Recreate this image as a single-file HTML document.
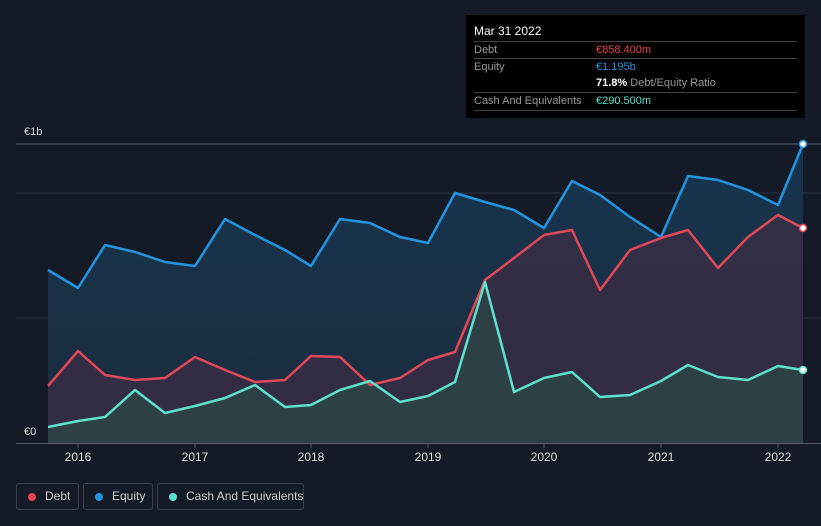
<html><head><style>body{margin:0;background:#151b26;font-family:"Liberation Sans",sans-serif;width:821px;height:526px;overflow:hidden;position:relative}
.tt{position:absolute;left:466px;top:15px;width:339px;height:103px;background:#000;color:#fff;font-size:11px}
.r{position:absolute;left:8px;right:8px;border-top:1px solid #444;height:17px;line-height:17px}
.g{color:#999}.v{position:absolute;left:122px;top:0}
.leg{position:absolute;top:483px;height:27px;border:1px solid #3a404a;border-radius:3px;color:#ccc;font-size:12px;line-height:25px;box-sizing:border-box;white-space:nowrap}
.leg i{position:absolute;left:11px;top:9px;width:8px;height:8px;border-radius:50%}
</style></head><body>
<svg width="821" height="526" style="position:absolute;left:0;top:0">
<defs>
<linearGradient id="e" x1="0" y1="0" x2="0" y2="1"><stop offset="0" stop-color="#163550"/><stop offset="1" stop-color="#1c2c3d"/></linearGradient>
</defs>
<line x1="16" y1="144" x2="821" y2="144" stroke="#555b66"/>
<line x1="16" y1="193" x2="821" y2="193" stroke="#2a313d"/>
<line x1="16" y1="318" x2="821" y2="318" stroke="#2a313d"/>
<polygon fill="url(#e)" points="48,443 48,270 78,288 105,245 135,252 165,262 195,266 225,219 255,235 285,250 311,266 340,219 370,223 400,237 428,243 455,193 485,202 514,210 544,228 572,181 600,195 630,217 661,237 688,176 718,180 748,190 778,205 803,144 803,443"/>
<polygon fill="#352d42" opacity="0.9" points="48,443 48,386 78,351 105,375 135,380 165,378 195,357 225,370 255,382 285,380 311,356 340,357 370,385 400,378 428,360 455,352 485,280 514,258 544,235 572,230 600,290 630,250 661,238 688,230 718,268 748,237 778,215 803,228 803,443"/>
<polygon fill="#2c4347" opacity="0.9" points="48,443 48,427 78,421 105,417 135,390 165,413 195,406 225,398 255,385 285,407 311,405 340,390 370,381 400,402 428,396 455,382 485,282 514,392 544,378 572,372 600,397 630,395 661,381 688,365 718,377 748,380 778,366 803,370 803,443"/>
<polyline fill="none" stroke="#2394e0" stroke-width="2.5" stroke-linejoin="round" points="48,270 78,288 105,245 135,252 165,262 195,266 225,219 255,235 285,250 311,266 340,219 370,223 400,237 428,243 455,193 485,202 514,210 544,228 572,181 600,195 630,217 661,237 688,176 718,180 748,190 778,205 803,144"/>
<polyline fill="none" stroke="#e0485a" stroke-width="2.5" stroke-linejoin="round" points="48,386 78,351 105,375 135,380 165,378 195,357 225,370 255,382 285,380 311,356 340,357 370,385 400,378 428,360 455,352 485,280 514,258 544,235 572,230 600,290 630,250 661,238 688,230 718,268 748,237 778,215 803,228"/>
<polyline fill="none" stroke="#5de0cc" stroke-width="2.5" stroke-linejoin="round" points="48,427 78,421 105,417 135,390 165,413 195,406 225,398 255,385 285,407 311,405 340,390 370,381 400,402 428,396 455,382 485,282 514,392 544,378 572,372 600,397 630,395 661,381 688,365 718,377 748,380 778,366 803,370"/>
<circle cx="803" cy="144" r="3.5" fill="#fff" stroke="#2394e0" stroke-width="1.5"/>
<circle cx="803" cy="228" r="3.5" fill="#fff" stroke="#e0485a" stroke-width="1.5"/>
<circle cx="803" cy="370" r="3.5" fill="#fff" stroke="#5de0cc" stroke-width="1.5"/>
<rect x="16" y="420" width="32" height="23" fill="#151b26"/>
<line x1="16" y1="443.5" x2="821" y2="443.5" stroke="#555b66"/>
<g stroke="#555b66"><line x1="78" y1="443" x2="78" y2="448"/><line x1="195" y1="443" x2="195" y2="448"/><line x1="311" y1="443" x2="311" y2="448"/><line x1="428" y1="443" x2="428" y2="448"/><line x1="544" y1="443" x2="544" y2="448"/><line x1="661" y1="443" x2="661" y2="448"/><line x1="778" y1="443" x2="778" y2="448"/></g>
<g fill="#ddd" font-size="11" font-family="Liberation Sans"><text x="24" y="135">€1b</text><text x="24" y="435">€0</text></g>
<g fill="#ddd" font-size="12" font-family="Liberation Sans" text-anchor="middle"><text x="78" y="461">2016</text><text x="195" y="461">2017</text><text x="311" y="461">2018</text><text x="428" y="461">2019</text><text x="544" y="461">2020</text><text x="661" y="461">2021</text><text x="778" y="461">2022</text></g>
</svg>
<div class="tt">
<div style="position:absolute;left:8px;top:9px;font-size:12px">Mar 31 2022</div>
<div class="r" style="top:26px"><span class="g">Debt</span><span class="v" style="color:#e8434f">€858.400m</span></div>
<div class="r" style="top:43px"><span class="g">Equity</span><span class="v" style="color:#2394e0">€1.195b</span></div>
<div class="r" style="top:60px;border:0"><span class="v"><b>71.8%</b> <span class="g">Debt/Equity Ratio</span></span></div>
<div class="r" style="top:77px"><span class="g">Cash And Equivalents</span><span class="v" style="color:#5de0cc">€290.500m</span></div>
<div class="r" style="top:95px;height:0"></div>
</div>
<div class="leg" style="left:16px;width:63px"><i style="background:#e8434f"></i><span style="margin-left:28px">Debt</span></div>
<div class="leg" style="left:83px;width:70px"><i style="background:#2394e0"></i><span style="margin-left:28px">Equity</span></div>
<div class="leg" style="left:157px;width:147px"><i style="background:#5de0cc"></i><span style="margin-left:28px">Cash And Equivalents</span></div>
</body></html>
